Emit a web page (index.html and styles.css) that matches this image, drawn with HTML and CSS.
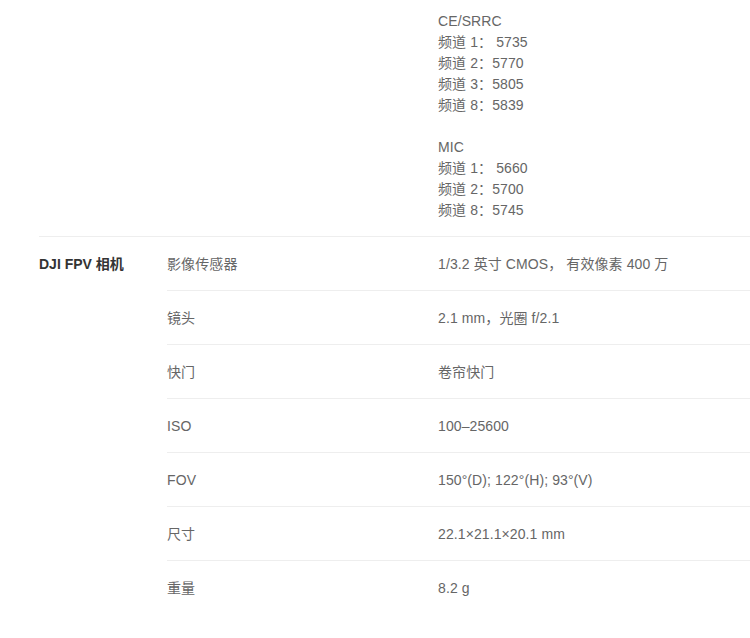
FILE: index.html
```html
<!DOCTYPE html>
<html lang="zh-CN">
<head>
<meta charset="utf-8">
<title>DJI FPV 规格参数</title>
<link rel="stylesheet" href="styles.css">
</head>
<body>
<div class="specs">
  <div class="section section-tail">
    <div class="category"></div>
    <div class="rows">
      <div class="row row-tail">
        <div class="label"></div>
        <div class="value">
          <div>CE/SRRC</div>
          <div>频道 1： 5735</div>
          <div>频道 2：5770</div>
          <div>频道 3：5805</div>
          <div>频道 8：5839</div>
          <div class="blank">&nbsp;</div>
          <div>MIC</div>
          <div>频道 1： 5660</div>
          <div>频道 2：5700</div>
          <div>频道 8：5745</div>
        </div>
      </div>
    </div>
  </div>
  <div class="section">
    <div class="category">DJI FPV 相机</div>
    <div class="rows">
      <div class="row"><div class="label">影像传感器</div><div class="value">1/3.2 英寸 CMOS， 有效像素 400 万</div></div>
      <div class="row"><div class="label">镜头</div><div class="value">2.1 mm，光圈 f/2.1</div></div>
      <div class="row"><div class="label">快门</div><div class="value">卷帘快门</div></div>
      <div class="row"><div class="label">ISO</div><div class="value">100–25600</div></div>
      <div class="row"><div class="label">FOV</div><div class="value">150°(D); 122°(H); 93°(V)</div></div>
      <div class="row"><div class="label">尺寸</div><div class="value">22.1×21.1×20.1 mm</div></div>
      <div class="row"><div class="label">重量</div><div class="value">8.2 g</div></div>
    </div>
  </div>
</div>
</body>
</html>
```

FILE: styles.css
```css
html, body {
  margin: 0;
  padding: 0;
  background: #fff;
  overflow: hidden;
}
body {
  font-family: "Liberation Sans", "Noto Sans CJK SC", sans-serif;
  font-size: 14px;
  line-height: 21px;
  color: #666;
}
.specs {
  padding-left: 39px;
}
.section {
  display: grid;
  grid-template-columns: 128px 1fr;
  border-top: 1px solid #eee;
}
.section-tail {
  border-top: none;
}
.category {
  padding-top: 17px;
  color: #333;
  font-weight: bold;
}
.section-tail .category {
  padding-top: 0;
}
.rows {
  display: flex;
  flex-direction: column;
}
.row {
  display: grid;
  grid-template-columns: 271px 1fr;
  padding: 17px 0 15px;
  border-top: 1px solid #eee;
}
.row:first-child {
  border-top: none;
}
.row-tail {
  padding-top: 11px;
}
.label, .value {
  color: #666;
  letter-spacing: 0.1px;
}
```
